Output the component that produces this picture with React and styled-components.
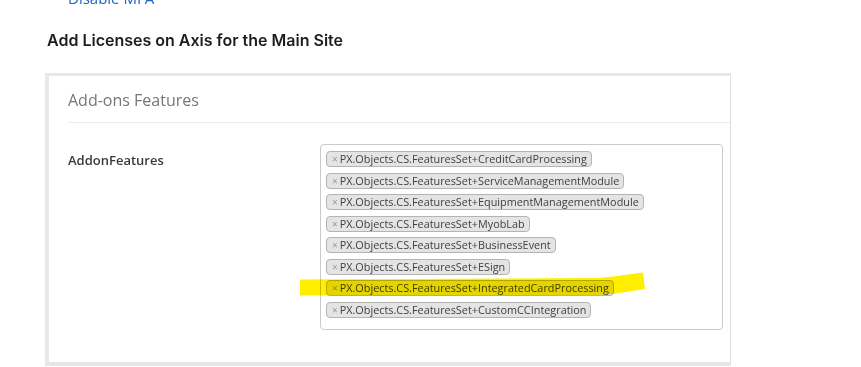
import styled, { createGlobalStyle } from 'styled-components'

const GlobalStyle = createGlobalStyle`
	html, body {
		margin: 0;
		padding: 0;
		background: #fff;
	}
	body {
		font-family: "Open Sans", "Liberation Sans", sans-serif;
		overflow: hidden;
	}
`

const Page = styled.div`
	position: relative;
	width: 861px;
	height: 367px;
	overflow: hidden;
	padding-left: 47px;
	box-sizing: border-box;
`

const TopLink = styled.a`
	display: block;
	margin-top: -12px;
	padding-left: 21px;
	font-size: 15px;
	line-height: 20px;
	color: #1f63c4;
	text-decoration: none;
`

const Heading = styled.h2`
	margin: 22px 0 0;
	font-family: Inter, "Liberation Sans", sans-serif;
	font-size: 16px;
	font-weight: 600;
	line-height: 20px;
	color: #1d1d1f;
`

const Panel = styled.section`
	margin: 23px 0 0 -2px;
	width: 686px;
	height: 293px;
	box-sizing: border-box;
	background: #fff;
	border-style: solid;
	border-color: #e6e9ec #dedede #e4e7ea #e6e9ec;
	border-width: 3px 1px 4px 4px;
`

const PanelHeader = styled.div`
	margin-left: 19px;
	padding: 12.5px 0 11.5px;
	border-bottom: 1px solid #ececec;
	font-size: 16px;
	font-weight: 400;
	line-height: 22px;
	color: #767676;
`

const FieldRow = styled.div`
	display: grid;
	grid-template-columns: 252px 403px;
	padding: 21px 0 0 19px;
`

const FieldLabel = styled.label`
	padding-top: 6px;
	font-size: 13px;
	font-weight: 600;
	line-height: 20px;
	color: #3a3a3a;
`

const MultiSelect = styled.ul`
	list-style: none;
	margin: 0;
	height: 186px;
	box-sizing: border-box;
	padding: 6px 5px 0;
	display: flex;
	flex-direction: column;
	align-items: flex-start;
	gap: 5.5px;
	border: 1px solid #cacaca;
	border-radius: 4px;
	background: #fff;
`

const Tag = styled.li`
	display: flex;
	align-items: center;
	height: 16px;
	box-sizing: border-box;
	padding: 0 4px 0 5px;
	border: 1px solid #b4b4b4;
	border-radius: 4px;
	background: #e4e4e4;
	font-size: 10.85px;
	line-height: 14px;
	color: #3f3f3f;
	white-space: nowrap;
`

const Remove = styled.span`
	margin-right: 2px;
	font-size: 10px;
	color: #999;
`

const Highlight = styled.svg`
	position: absolute;
	left: 0;
	top: 0;
	pointer-events: none;
	mix-blend-mode: multiply;
`

const features = [
	'CreditCardProcessing',
	'ServiceManagementModule',
	'EquipmentManagementModule',
	'MyobLab',
	'BusinessEvent',
	'ESign',
	'IntegratedCardProcessing',
	'CustomCCIntegration',
]

export default function App() {
	return (
		<>
			<GlobalStyle />
			<Page>
				<TopLink href="#">Disable MFA</TopLink>
				<Heading>Add Licenses on Axis for the Main Site</Heading>
				<Panel>
					<PanelHeader>Add-ons Features</PanelHeader>
					<FieldRow>
						<FieldLabel>AddonFeatures</FieldLabel>
						<MultiSelect>
							{features.map(f => (
								<Tag key={f}>
									<Remove>×</Remove>PX.Objects.CS.FeaturesSet+{f}
								</Tag>
							))}
						</MultiSelect>
					</FieldRow>
				</Panel>
				<Highlight width="861" height="367" viewBox="0 0 861 367">
					<path
						d="M300 279.5 L598 278 Q612 277 624 275 L643 272.5 L645 289 L622 292.5 Q610 294.5 596 295 L300 295.5 Z"
						fill="#ffee00"
					/>
				</Highlight>
			</Page>
		</>
	)
}
